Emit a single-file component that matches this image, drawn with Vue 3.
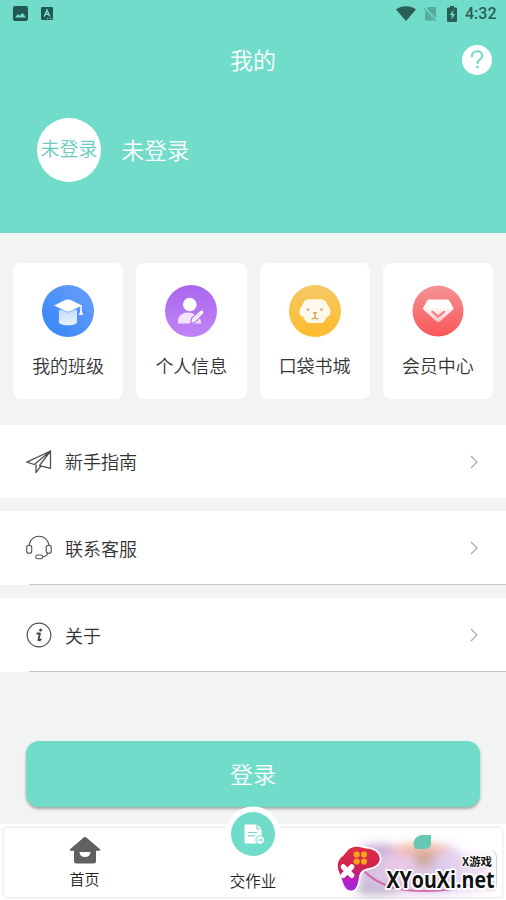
<script setup>
const cards = [
  { label: '我的班级', icon: 'class' },
  { label: '个人信息', icon: 'person' },
  { label: '口袋书城', icon: 'books' },
  { label: '会员中心', icon: 'member' },
]
const rows = [
  { label: '新手指南', icon: 'guide', line: false },
  { label: '联系客服', icon: 'service', line: true },
  { label: '关于', icon: 'about', line: true },
]
</script>

<template>
  <div class="page">
    <header class="hero">
      <div class="status">
        <svg class="s-img" width="15" height="15" viewBox="0 0 15 15">
          <rect width="15" height="15" rx="2" fill="#1f594f" />
          <path d="M2 11.6 5 8l1.7 1.8L9.5 6.800l3.500 4.800z" fill="#72dccb" />
        </svg>
        <svg class="s-a" width="12" height="13" viewBox="0 0 12 13">
          <rect width="12" height="13" rx="1.200" fill="#1f594f" />
          <path d="M3.300 9.400 6 3l2.700 6.400M4.200 7.400h3.600" fill="none" stroke="#82e2d3" stroke-width="1.400" />
          <path d="M6 11.500h1.400M9 11.500h1.400" stroke="#82e2d3" stroke-width="1" />
        </svg>
        <span class="grow"></span>
        <svg class="s-wifi" width="20" height="15" viewBox="0 0 20 15">
          <path d="M0 3.400C5.500-.9 14.500-.9 20 3.400L10 15z" fill="#285f56" />
        </svg>
        <svg class="s-sim" width="15" height="16" viewBox="0 0 15 16">
          <path d="M5.500 1H13v13.500H2V4.500z" fill="#55ab9d" />
          <path d="M.3 1 14 15.300" stroke="#72dccb" stroke-width="2.600" />
          <path d="M.5 2 13.500 15.500" stroke="#469c8e" stroke-width="1" />
        </svg>
        <svg class="s-bat" width="10" height="16" viewBox="0 0 10 16">
          <path d="M3 0h4v1.500h2q1 0 1 1V15q0 1-1 1H1q-1 0-1-1V2.500q0-1 1-1h2z" fill="#285f56" />
          <path d="M6.500 3.800 2.700 9h2v4.400L8 8H5.700z" fill="#72dccb" />
        </svg>
        <span class="time">4:32</span>
      </div>
      <div class="titlebar">
        <span class="side"></span>
        <h1>我的</h1>
        <span class="side">
          <svg width="30" height="30" viewBox="0 0 30 30">
            <circle cx="15" cy="15" r="15" fill="#fff" />
            <path d="M9.900 11.300c0-6.600 10.400-6.700 10.400-.5 0 3.700-4.700 3.500-4.700 7.200" fill="none" stroke="#7bd9ca" stroke-width="2.200" stroke-linecap="round" />
            <circle cx="15.600" cy="22" r="1.500" fill="#7bd9ca" />
          </svg>
        </span>
      </div>
      <div class="profile">
        <div class="avatar">未登录</div>
        <div class="name">未登录</div>
      </div>
    </header>

    <section class="cards">
      <div v-for="c in cards" :key="c.label" class="card">
        <svg v-if="c.icon === 'class'" width="52" height="52" viewBox="0 0 52 52">
          <defs>
            <linearGradient id="blue" x1="1" y1="0" x2="0" y2="1"><stop stop-color="#6b9ff7" /><stop offset="1" stop-color="#3286fa" /></linearGradient>
            <linearGradient id="cap" x1="0" y1="0" x2="0" y2="1"><stop stop-color="#c5dcfe" /><stop offset="1" stop-color="#e8f2ff" /></linearGradient>
          </defs>
          <circle cx="26" cy="26" r="26" fill="url(#blue)" />
          <path d="M17 25h18v13q-3 2.300-9 2.300T17 38z" fill="url(#cap)" />
          <path d="M11.500 20.500 23.500 14.600q2.500-1 5 0l12.200 5.900-12.400 6q-2.300 1-4.600 0z" fill="#fff" stroke="#579af9" stroke-width=".7" />
          <path d="M39 20.500v6.800" stroke="#fff" stroke-width="1.500" />
          <path d="M39 25.500l1.500 4h-3z" fill="#fff" stroke="#fff" />
        </svg>
        <svg v-else-if="c.icon === 'person'" width="52" height="52" viewBox="0 0 52 52">
          <defs><linearGradient id="purple" x1="0" y1="0" x2="0" y2="1"><stop stop-color="#a967ed" /><stop offset="1" stop-color="#c184f5" /></linearGradient></defs>
          <circle cx="26" cy="26" r="26" fill="url(#purple)" />
          <circle cx="24.800" cy="19.500" r="6.800" fill="#fff" />
          <path d="M13 38.500v-2.200c0-8.200 9-10.400 15.200-7.500l4.500 2.400q3.500 3 3.500 7.300z" fill="#f2e3fd" />
          <path d="m25.500 38.500 1.100-5.200 8.900-8.200q1.500-.8 2.800.5t.4 3L30.500 37z" fill="#fff" stroke="#b575f0" stroke-width="1.300" />
          <path d="m28.500 35 7-6.800" stroke="#d0a3f6" stroke-width=".8" />
        </svg>
        <svg v-else-if="c.icon === 'books'" width="52" height="52" viewBox="0 0 52 52">
          <defs><linearGradient id="yellow" x1="0" y1="0" x2="0" y2="1"><stop stop-color="#f4c965" /><stop offset="1" stop-color="#fdbb2c" /></linearGradient></defs>
          <circle cx="26" cy="26" r="26" fill="url(#yellow)" />
          <path d="M19.500 14.200h13q3 0 4.500 2.500l2 4.300q2.500 2.500 2.500 5.500 0 4.500-4 5.700l-2 3.800q-1.300 2-4 2h-11q-2.700 0-4-2l-2-3.800q-4-1.200-4-5.700 0-3 2.500-5.500l2-4.300q1.500-2.500 4.500-2.500z" fill="#fff9ec" />
          <circle cx="19" cy="24.500" r="1.600" fill="#dcb88e" /><circle cx="32.500" cy="24.500" r="1.600" fill="#dcb88e" />
          <path d="M24.300 27.500h3.400L26 29.600z" fill="#d4a657" stroke="#d4a657" />
          <path d="M26 29.500v2.300M22.500 33.800q3 .5 3.500-2.200.5 2.700 3.500 2.200" fill="none" stroke="#d4a657" stroke-width="1.200" />
        </svg>
        <svg v-else width="52" height="52" viewBox="0 0 52 52">
          <defs>
            <linearGradient id="red" x1="0" y1="0" x2="0" y2="1"><stop stop-color="#f49494" /><stop offset="1" stop-color="#fb5558" /></linearGradient>
            <linearGradient id="gem" x1="0" y1="0" x2="0" y2="1"><stop offset=".3" stop-color="#fff" /><stop offset="1" stop-color="#fbc4c4" /></linearGradient>
          </defs>
          <circle cx="26" cy="26" r="25.500" fill="url(#red)" />
          <path d="M17 14.500h18.500q1.100 0 1.700 1l4 7q.7 1.200-.3 2.200L28.200 36.200q-2 1.500-4 0L11.600 24.700q-1-1-.3-2.200l4-7q.6-1 1.700-1z" fill="url(#gem)" />
          <path d="m20.500 26.800 4.900 4.300q.8.600 1.600 0l4.900-4.300" fill="none" stroke="#f37e80" stroke-width="2.200" stroke-linecap="round" />
        </svg>
        <span>{{ c.label }}</span>
      </div>
    </section>

    <section class="rows">
      <div v-for="r in rows" :key="r.label" class="row" :class="{ lined: r.line }">
        <svg class="ico" width="26" height="26" viewBox="0 0 26 26" fill="none" stroke="#505050" stroke-width="1.300" stroke-linejoin="round" stroke-linecap="round">
          <path v-if="r.icon === 'guide'" d="M24.500 2 .9 13.200l7.400 2.300L24.500 2v17.300l-11-2.700L24.500 2M10 16v7.600l4.500-6" />
          <g v-else-if="r.icon === 'service'" stroke-width="1.100">
            <path d="M3.200 10.500v-.8C5-1.600 21-1.600 22.900 9.700v.8" />
            <rect x=".7" y="10.200" width="5" height="8" rx="2.300" />
            <rect x="20.200" y="10.200" width="5" height="8" rx="2.300" />
            <path d="M22 18.200q-1 3-5 3.600" />
            <rect x="9.800" y="20" width="6.800" height="3.800" rx="1.600" />
          </g>
          <g v-else>
            <circle cx="13" cy="13" r="11.800" stroke-width="1.200" />
            <circle cx="14.600" cy="8" r="1.500" fill="#454545" stroke="none" />
            <path d="M11.300 11.500h2.600l-1.500 6.700q1.200.4 2.300-.7" stroke-width="1.900" stroke="#454545" />
          </g>
        </svg>
        <span class="label">{{ r.label }}</span>
        <svg width="8" height="14" viewBox="0 0 8 14"><path d="M1 1l6 6-6 6" fill="none" stroke="#aaa" stroke-width="1.200" /></svg>
      </div>
    </section>

    <button class="login">登录</button>

    <nav class="nav">
      <div class="tabs">
        <div class="tab home">
          <svg width="32" height="28" viewBox="0 0 32 28">
            <path d="M15 1.300q1-.9 2 0L31 13.200q1 1.300-.7 1.500H27V25q0 2.500-2.500 2.500h-17Q5 27.500 5 25V14.700H1.700Q0 14.500 1 13.200z" fill="#606060" />
            <path d="M10.500 16h11q-.2 5-5.500 5t-5.500-5z" fill="#fff" />
          </svg>
          <span>首页</span>
        </div>
        <div class="tab center">
          <svg class="work" width="56" height="56" viewBox="0 0 56 56">
            <circle cx="28" cy="28" r="27.500" fill="#fff" />
            <circle cx="28" cy="28" r="22" fill="#72dccb" />
            <path d="M20.500 18.500h11v5h5v14H20.500q-1 0-1-1v-17q0-1 1-1z" fill="#fff" />
            <path d="m32.800 18.800 3.500 3.600h-3.500z" fill="#fff" />
            <path d="M23 26.500h9M23 29.800h7" stroke="#72dccb" stroke-width="1.200" />
            <circle cx="35.200" cy="34" r="4.300" fill="#fff" stroke="#72dccb" stroke-width="1" />
            <path d="M32.500 34h4.500M35.500 32l2 2-2 2" fill="none" stroke="#72dccb" stroke-width="1" />
          </svg>
          <span>交作业</span>
        </div>
        <div class="tab"></div>
      </div>
    </nav>

    <div class="watermark">
      <svg width="176" height="66" viewBox="0 0 176 66">
        <defs>
          <filter id="soft" x="-20%" y="-50%" width="140%" height="200%"><feGaussianBlur stdDeviation="5" /></filter>
          <linearGradient id="haze" x1="0" y1="0" x2="1" y2="0"><stop stop-color="#aa95c7" /><stop offset=".3" stop-color="#dfa8d8" /><stop offset=".6" stop-color="#c3a8e3" /><stop offset="1" stop-color="#f4dcec" /></linearGradient>
          <linearGradient id="pad" x1="0" y1="0" x2="0" y2="1"><stop stop-color="#e02e48" /><stop offset=".48" stop-color="#cf214f" /><stop offset=".8" stop-color="#b520cf" /><stop offset="1" stop-color="#9f28dc" /></linearGradient>
        </defs>
        <g filter="url(#soft)">
          <path d="M32 12h92l10 10h28v34l-56 4H28z" fill="url(#haze)" opacity=".62" />
          <ellipse cx="91" cy="15" rx="28" ry="6" fill="#f3b08b" opacity=".75" />
          <ellipse cx="50" cy="15" rx="16" ry="5" fill="#b393c8" opacity=".6" />
          <ellipse cx="94" cy="26" rx="11" ry="8" fill="#c6a081" opacity=".7" />
          <ellipse cx="48" cy="57" rx="24" ry="5" fill="#a9a5c0" opacity=".5" />
        </g>
        <path d="M92 1h8q1 0 1 1v8q0 4-6 5H85q-3-6 0-10 3-4 7-4z" fill="#65c9b6" />
        <path d="M32 35c17 18 38 22 62 22s38-2 48-8" fill="none" stroke="#d24a94" stroke-width="2" opacity=".75" />
        <path d="M163 17q4 2 3.500 8v28" fill="none" stroke="#bba9c6" stroke-width="1" opacity=".55" />
        <path d="M158 57v-4M161 57v-7M164 57v-10" stroke="#d18dc5" opacity=".7" />
        <path d="M19 15c7-4 12-1.500 17-.5 7 .4 12 3 13.500 8.500 1.500 6-4.500 10-10.500 11-7 1.500-9 4-10 9-.6 5-2 13-7 13.500-7 1-9-7.500-11-14.500C5.500 32 7.500 26 13 22z" fill="url(#pad)" stroke="#fff" stroke-width="3.500" paint-order="stroke" />
        <g fill="#f8a51a"><circle cx="26.700" cy="20.500" r="3.100" /><circle cx="34" cy="20.500" r="3.100" /><circle cx="26.700" cy="27.500" r="3.100" /><circle cx="34" cy="27.500" r="3.100" /></g>
        <path d="m13.200 32.800 8.600 8.600M21.800 32.800l-8.600 8.600" stroke="#fff" stroke-width="5.200" stroke-linecap="round" />
        <text class="wm-small" x="132" y="31.500" textLength="30" lengthAdjust="spacingAndGlyphs">X游戏</text>
        <text class="wm-big" x="56.500" y="54.300" textLength="108" lengthAdjust="spacingAndGlyphs">XYouXi.net</text>
      </svg>
    </div>
  </div>
</template>

<style>
body { margin: 0; background: #f2f3f3; overflow: hidden; }
</style>

<style scoped>
.page { position: relative; display: flex; flex-direction: column; width: 506px; height: 900px; overflow: hidden; background: #f2f3f3; font-family: "Noto Sans CJK SC", sans-serif; font-weight: 350; color: #333; }
.page * { box-sizing: border-box; }
.hero { height: 233px; background: #72dccb; color: #fff; }
.status { display: flex; align-items: center; height: 28px; padding: 0 9px 0 13px; }
.s-img, .s-a, .s-wifi, .s-bat, .s-sim { margin-bottom: 1px; }
.s-a { margin-left: 13px; }
.grow { flex: 1; }
.s-sim { margin-left: 7px; }
.s-bat { margin-left: 9px; }
.time { width: 32px; margin-left: 8px; font: 500 16px/28px Roboto, sans-serif; color: #285f56; white-space: nowrap; }
.titlebar { display: flex; align-items: center; justify-content: space-between; height: 64px; padding: 0 14px; }
.side { display: flex; width: 30px; }
h1 { margin: 0 0 2px; font-size: 23px; line-height: 34px; font-weight: 350; }
.profile { display: flex; align-items: center; height: 64px; margin-top: 26px; padding-left: 37px; }
.avatar { display: flex; align-items: center; justify-content: center; width: 64px; height: 64px; padding-bottom: 5px; border-radius: 50%; background: #fff; color: #6bcdbd; font-size: 19px; white-space: nowrap; }
.name { margin-left: 20.500px; padding-bottom: 2px; font-size: 22.700px; }
.cards { display: grid; grid-template-columns: repeat(4, 1fr); gap: 13px; padding: 30px 13px 26px; }
.card { display: flex; flex-direction: column; align-items: center; height: 136px; padding-top: 22px; border-radius: 8px; background: #fff; }
.card span { margin-top: 15px; font-size: 18px; line-height: 26px; }
.rows { display: flex; flex-direction: column; gap: 13px; }
.row { position: relative; display: flex; align-items: center; height: 73px; padding: 0 28px 0 26px; background: #fff; }
.row.lined { height: 74px; }
.lined::after { content: ""; position: absolute; left: 29px; right: 0; bottom: 0; height: 1px; background: #c7c7c7; }
.label { flex: 1; margin-left: 13px; padding-bottom: 1px; font-size: 18px; }
.login { height: 66px; margin: 69px 26px 0; padding: 0 0 2px; border: 0; border-radius: 13px; background: #72dccb; color: #fff; font-family: inherit; font-size: 23px; font-weight: 350; box-shadow: 0 2px 3px #00000050; }
.nav { height: 76px; margin-top: 17px; padding: 3px; background: #fff; }
.tabs { display: grid; grid-template-columns: repeat(3, 1fr); height: 71px; border: 1px solid #eee; border-radius: 3px; box-shadow: 0 0 2px #0000001c; }
.tab { display: flex; flex-direction: column; align-items: center; padding-top: 8px; font-size: 15px; line-height: 22px; color: #222; }
.tab span { margin-top: 4px; }
.home { padding-right: 5px; }
.center { padding-top: 0; font-size: 15.500px; }
.work { flex: none; margin-top: -22px; }
.center span { margin-top: 7px; }
.watermark { position: absolute; left: 330px; top: 834px; width: 176px; height: 66px; }
.watermark svg { display: block; }
.wm-small, .wm-big { fill: #111; stroke: #fff; paint-order: stroke; stroke-linejoin: round; }
.wm-small { font: 700 11px "Noto Sans CJK SC", sans-serif; stroke-width: 2px; }
.wm-big { font: 700 24px "Open Sans", sans-serif; stroke-width: 4px; }
</style>
